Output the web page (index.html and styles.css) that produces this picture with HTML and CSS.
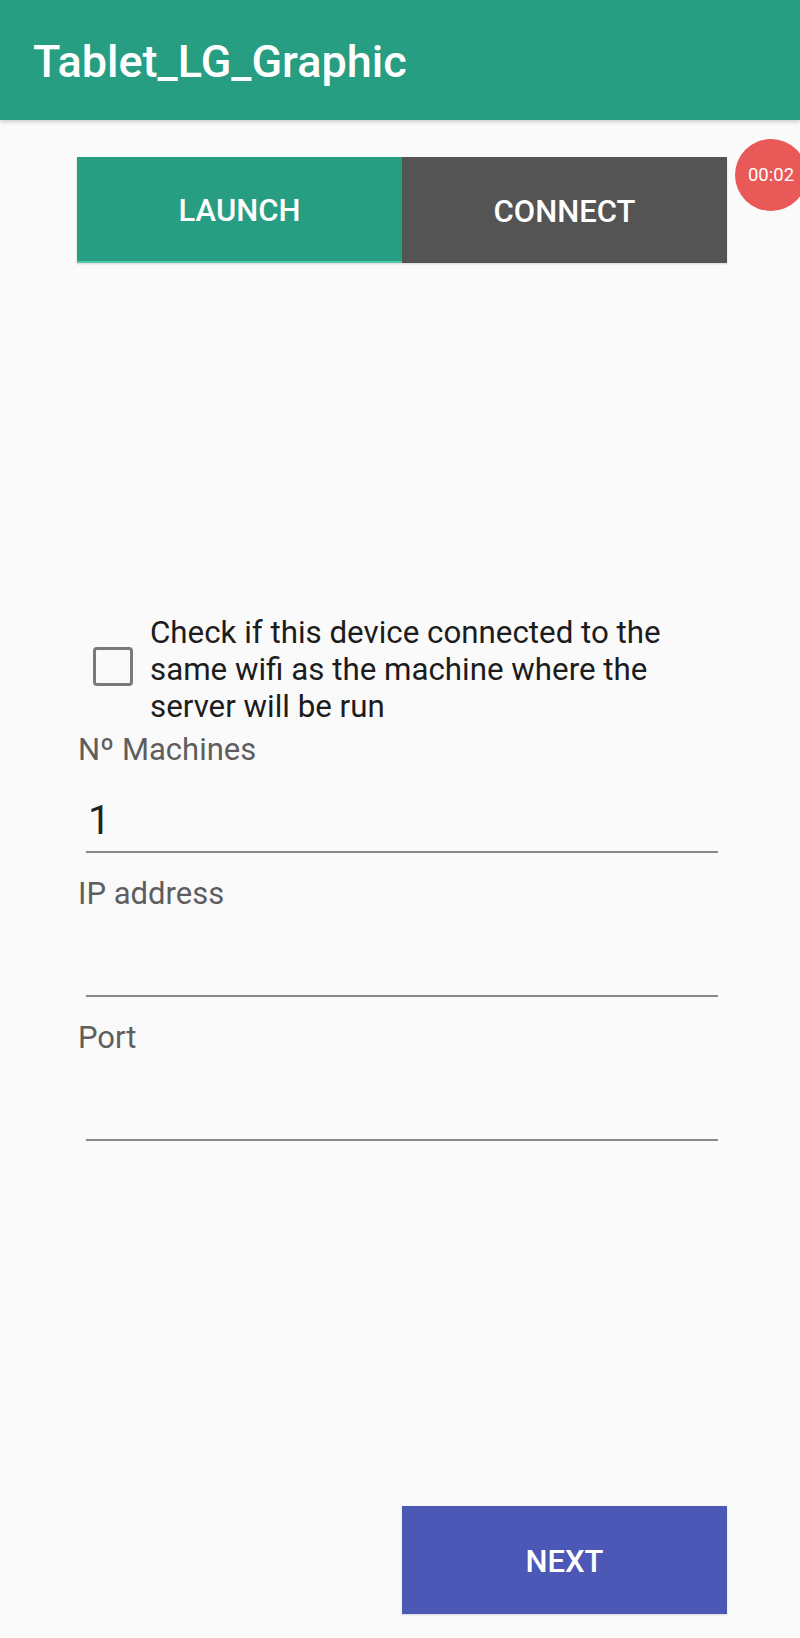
FILE: index.html
```html
<!DOCTYPE html>
<html>
<head>
<meta charset="utf-8">
<link rel="stylesheet" href="styles.css">
</head>
<body>
<div class="page">
  <header class="appbar"><h1 class="title">Tablet_LG_Graphic</h1></header>
  <main class="content">
    <div class="tabs">
      <div class="tab tab-active">LAUNCH</div>
      <div class="tab tab-inactive">CONNECT</div>
    </div>
    <label class="check-row">
      <span class="checkbox"></span>
      <span class="check-text">Check if this device connected to the same wifi as the machine where the server will be run</span>
    </label>
    <div class="field-label">Nº Machines</div>
    <div class="field-input"><span class="value">1</span></div>
    <div class="field-label">IP address</div>
    <div class="field-input"></div>
    <div class="field-label">Port</div>
    <div class="field-input"></div>
    <div class="actions">
      <div class="next-btn">NEXT</div>
    </div>
  </main>
  <div class="timer">00:02</div>
</div>
</body>
</html>
```
FILE: styles.css
```css
html, body {
  margin: 0;
  padding: 0;
  background: #fafafa;
}
.page {
  position: relative;
  width: 800px;
  height: 1638px;
  overflow: hidden;
  display: flex;
  flex-direction: column;
  font-family: Roboto, "Liberation Sans", sans-serif;
}
.appbar {
  height: 120px;
  flex: none;
  background: #279e81;
  display: flex;
  align-items: center;
  padding-left: 33px;
  box-shadow: 0 2px 4px rgba(0, 0, 0, 0.18);
  position: relative;
  z-index: 1;
}
.title {
  margin: 0;
  color: #fff;
  font-size: 45px;
  font-weight: 500;
  line-height: 1;
  padding-top: 2px;
}
.content {
  flex: 1;
  display: flex;
  flex-direction: column;
  margin: 0 73px 0 77px;
}
.tabs {
  margin-top: 37px;
  height: 106px;
  display: flex;
  box-shadow: 0 1px 2px rgba(0, 0, 0, 0.15);
}
.tab {
  flex: 1;
  display: flex;
  align-items: center;
  justify-content: center;
  color: #fff;
  font-size: 31px;
  font-weight: 500;
  padding-top: 2px;
}
.tab-active {
  background: #279e81;
  border-bottom: 2px solid #4fc9aa;
  box-sizing: border-box;
}
.tab-inactive {
  background: #545454;
}
.check-row {
  margin-top: 351px;
  display: flex;
  align-items: center;
}
.checkbox {
  flex: none;
  width: 34px;
  height: 33px;
  border: 3.5px solid #7a7a7a;
  border-radius: 4px;
  margin-left: 16px;
  margin-right: 17px;
  margin-top: -6px;
}
.check-text {
  font-size: 31.3px;
  line-height: 37px;
  color: #1c1c1c;
}
.field-label {
  margin-top: 7.5px;
  font-size: 31px;
  line-height: 34px;
  color: #5e5e5e;
  padding-left: 1px;
}
.field-input + .field-label {
  margin-top: 24px;
}
.field-input {
  margin: 0 9px;
  height: 86px;
  box-sizing: border-box;
  border-bottom: 2px solid #8a8a8a;
  display: flex;
  align-items: flex-end;
  padding: 0 0 7px 2px;
}
.value {
  font-size: 40px;
  line-height: 46px;
  color: #222;
}
.actions {
  margin-top: auto;
  margin-bottom: 24px;
  display: flex;
  justify-content: flex-end;
}
.next-btn {
  width: 325px;
  height: 108px;
  background: #4c58b6;
  color: #fff;
  font-size: 31px;
  font-weight: 500;
  display: flex;
  align-items: center;
  justify-content: center;
  padding-top: 2px;
  box-sizing: border-box;
  box-shadow: 0 1px 2px rgba(0, 0, 0, 0.15);
}
.timer {
  position: absolute;
  left: 735px;
  top: 139px;
  width: 72px;
  height: 72px;
  border-radius: 50%;
  background: #e85957;
  color: #fff;
  font-size: 18.5px;
  display: flex;
  align-items: center;
  justify-content: center;
}
```
